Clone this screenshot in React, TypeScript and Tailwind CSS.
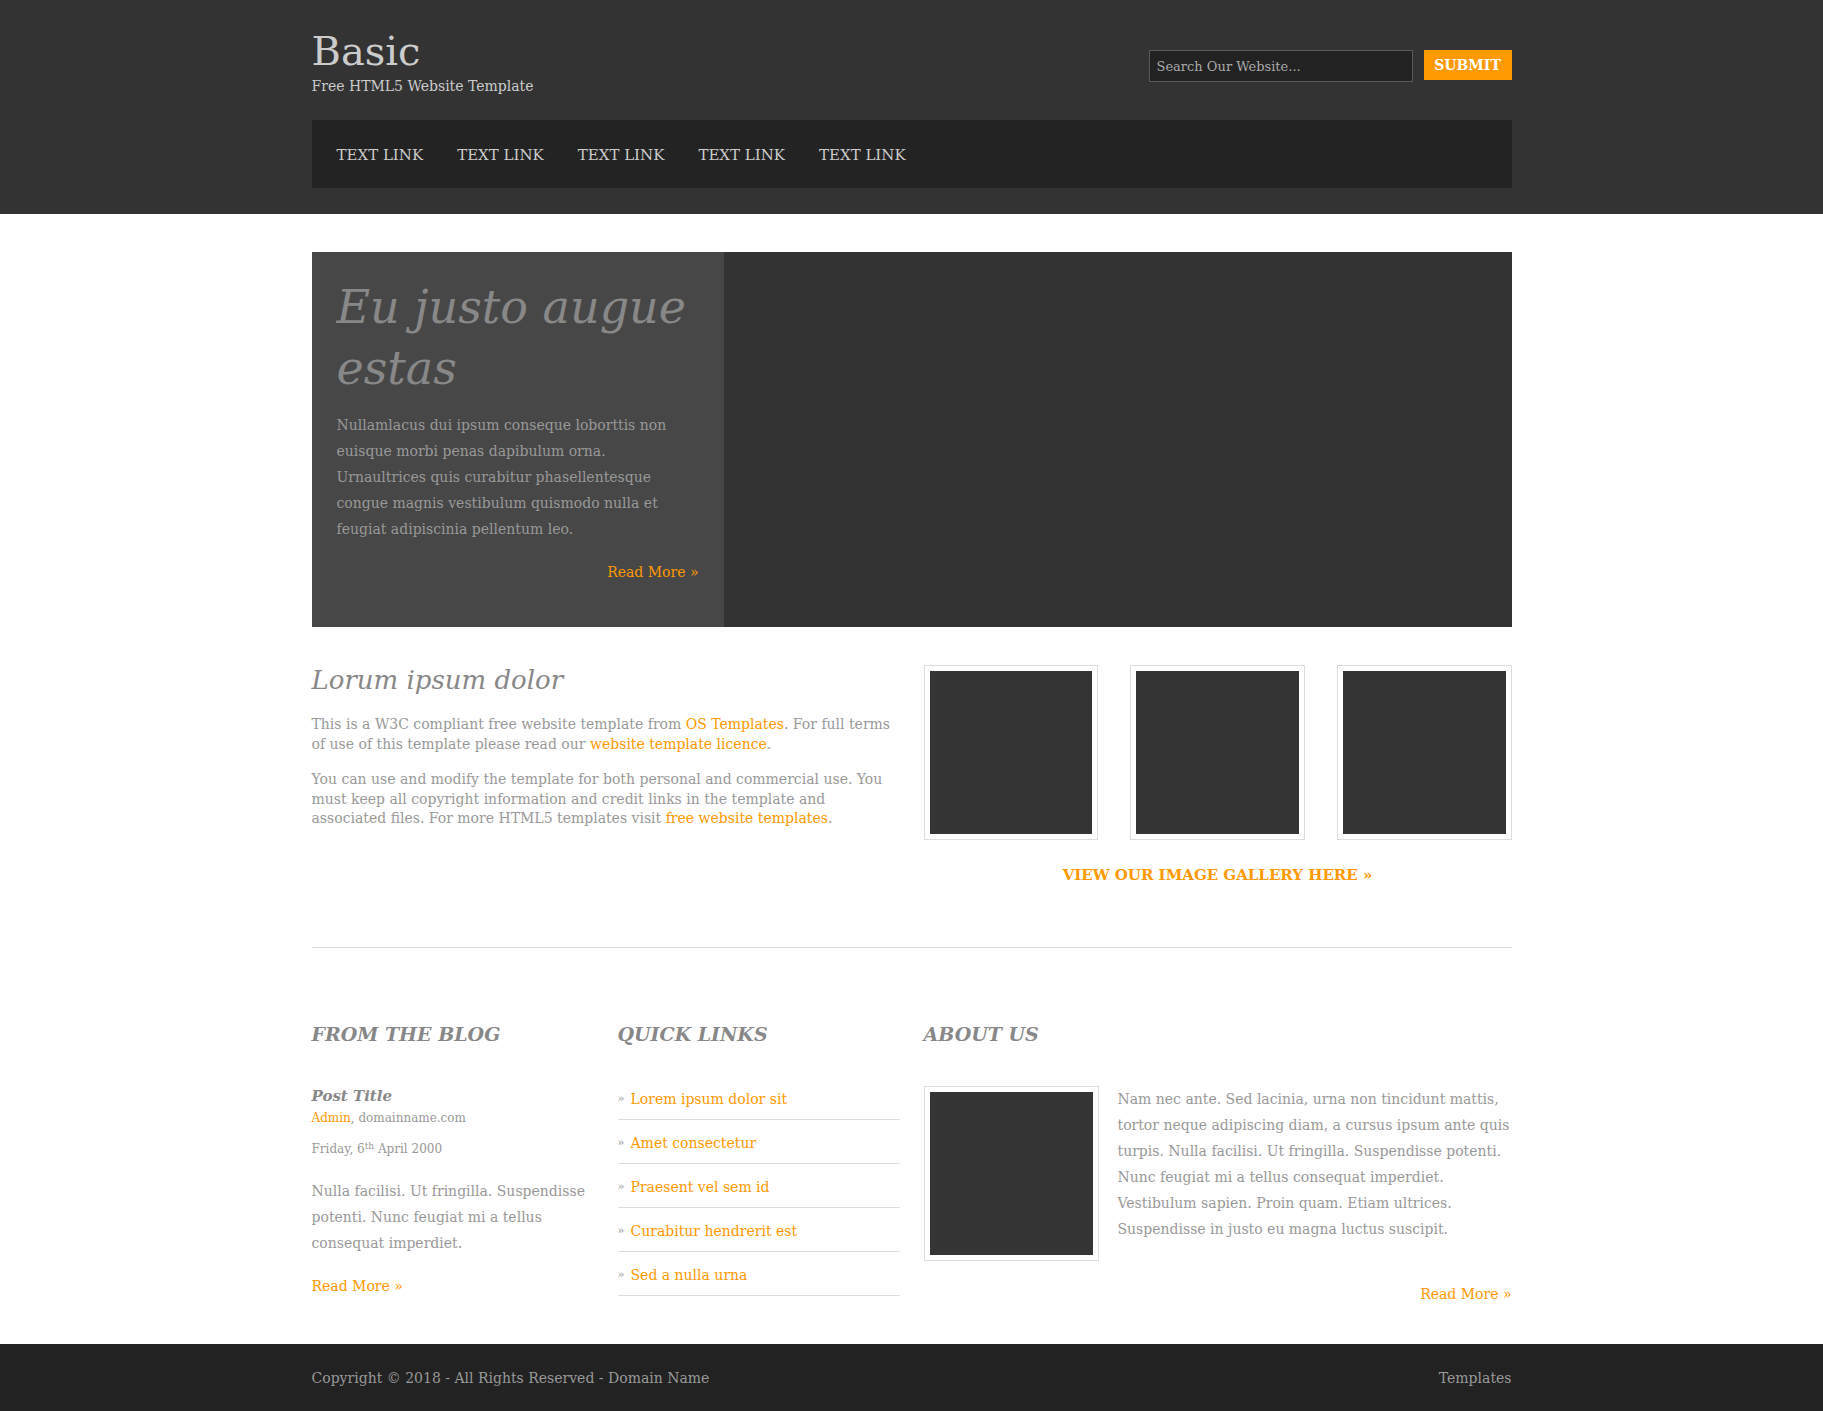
import React from "react";

const serif = "font-['DejaVu_Serif',Georgia,serif]";

const navLinks = ["TEXT LINK", "TEXT LINK", "TEXT LINK", "TEXT LINK", "TEXT LINK"];

const quickLinks = [
  "Lorem ipsum dolor sit",
  "Amet consectetur",
  "Praesent vel sem id",
  "Curabitur hendrerit est",
  "Sed a nulla urna",
];

function Thumb() {
  return (
    <div className="h-[175px] border border-[#dddddd] bg-white p-[5px]">
      <div className="h-full w-full bg-[#353535]" />
    </div>
  );
}

export default function App() {
  return (
    <div className={`${serif} min-h-[1411px] bg-white text-[14px] text-[#999999]`}>
      {/* header */}
      <header className="bg-[#333333] pb-[26px]">
        <div className="mx-auto w-[1200px]">
          <div className="flex items-start justify-between">
            <div className="pt-[31px]">
              <h1 className="text-[40px] leading-[40px] text-[#cccccc]">Basic</h1>
              <p className="mt-[6px] text-[14px] leading-[18px] text-[#cccccc]">
                Free HTML5 Website Template
              </p>
            </div>
            <form className="mt-[50px] flex items-start gap-[11px]">
              <input
                type="text"
                placeholder="Search Our Website..."
                className="h-[32px] w-[264px] border border-[#5a5a5a] bg-[#222222] px-[7px] text-[13px] text-[#aaaaaa] placeholder:text-[#aaaaaa] outline-none"
              />
              <button
                type="button"
                className="h-[30px] w-[88px] bg-[#ff9900] text-[14px] font-bold text-white"
              >
                SUBMIT
              </button>
            </form>
          </div>
          <nav className="mt-[25px] flex h-[68px] items-center gap-[34px] bg-[#232323] px-[25px] pt-[2px]">
            {navLinks.map((l, i) => (
              <a key={i} href="#" className="text-[15px] text-[#cccccc]">
                {l}
              </a>
            ))}
          </nav>
        </div>
      </header>

      <main className="mx-auto w-[1200px]">
        {/* hero */}
        <section className="mt-[38px] flex h-[375px] bg-[#333333]">
          <div className="w-[412px] bg-[#474747] px-[25px] pt-[25px]">
            <h2 className="text-[46px] italic leading-[61px] text-[#888888]">
              Eu justo augue estas
            </h2>
            <p className="mt-[13px] text-[14px] leading-[26px] text-[#999999]">
              Nullamlacus dui ipsum conseque loborttis non euisque morbi penas dapibulum orna.
              Urnaultrices quis curabitur phasellentesque congue magnis vestibulum quismodo nulla
              et feugiat adipiscinia pellentum leo.
            </p>
            <p className="mt-[20px] text-right leading-[20px]">
              <a href="#" className="text-[#ff9900]">
                Read More &raquo;
              </a>
            </p>
          </div>
          <div className="flex-1" />
        </section>

        {/* intro + gallery */}
        <section className="grid grid-cols-4 gap-x-6 pt-[38px]">
          <div className="col-span-2">
            <h2 className="text-[26px] italic leading-[31px] text-[#888888]">Lorum ipsum dolor</h2>
            <p className="mt-[19px] leading-[19.5px]">
              This is a W3C compliant free website template from{" "}
              <a href="#" className="text-[#ff9900]">OS Templates</a>. For full terms of use of
              this template please read our{" "}
              <a href="#" className="text-[#ff9900]">website template licence</a>.
            </p>
            <p className="mt-[16px] leading-[19.5px]">
              You can use and modify the template for both personal and commercial use. You must
              keep all copyright information and credit links in the template and associated files.
              For more HTML5 templates visit{" "}
              <a href="#" className="text-[#ff9900]">free website templates</a>.
            </p>
          </div>
          <div className="col-span-2">
            <div className="grid grid-cols-3 gap-8">
              <Thumb />
              <Thumb />
              <Thumb />
            </div>
            <p className="mt-[25px] text-center text-[15px] font-bold leading-[20px]">
              <a href="#" className="text-[#ff9900]">VIEW OUR IMAGE GALLERY HERE &raquo;</a>
            </p>
          </div>
        </section>

        <hr className="mt-[62px] border-0 border-t border-[#dddddd]" />

        {/* bottom columns */}
        <section className="grid grid-cols-4 gap-x-6 pt-[75px] pb-[40px]">
          <div>
            <h3 className="text-[19px] font-bold italic leading-[23px] text-[#888888]">
              FROM THE BLOG
            </h3>
            <h4 className="mt-[41px] text-[15px] font-bold italic leading-[18px] text-[#888888]">
              Post Title
            </h4>
            <p className="mt-[5px] text-[12px] leading-[16px]">
              <a href="#" className="text-[#ff9900]">Admin</a>, domainname.com
            </p>
            <p className="mt-[15px] text-[12px] leading-[16px]">
              Friday, 6<sup className="text-[9px]">th</sup> April 2000
            </p>
            <p className="mt-[21px] leading-[26px]">
              Nulla facilisi. Ut fringilla. Suspendisse potenti. Nunc feugiat mi a tellus consequat
              imperdiet.
            </p>
            <p className="mt-[20px] leading-[20px]">
              <a href="#" className="text-[#ff9900]">Read More &raquo;</a>
            </p>
          </div>

          <div>
            <h3 className="text-[19px] font-bold italic leading-[23px] text-[#888888]">
              QUICK LINKS
            </h3>
            <ul className="mt-[30px]">
              {quickLinks.map((q) => (
                <li
                  key={q}
                  className="flex items-center border-b border-[#dddddd] pt-[13px] pb-[10px] leading-[20px]"
                >
                  <span className="w-[13px] text-[11px] font-bold text-[#b5b5b5]">&raquo;</span>
                  <a href="#" className="text-[#ff9900]">{q}</a>
                </li>
              ))}
            </ul>
          </div>

          <div className="col-span-2">
            <h3 className="text-[19px] font-bold italic leading-[23px] text-[#888888]">ABOUT US</h3>
            <div className="mt-[40px] flex items-start gap-[19px]">
              <div className="w-[175px] shrink-0">
                <Thumb />
              </div>
              <p className="leading-[26px]">
                Nam nec ante. Sed lacinia, urna non tincidunt mattis, tortor neque adipiscing diam,
                a cursus ipsum ante quis turpis. Nulla facilisi. Ut fringilla. Suspendisse potenti.
                Nunc feugiat mi a tellus consequat imperdiet. Vestibulum sapien. Proin quam. Etiam
                ultrices. Suspendisse in justo eu magna luctus suscipit.
              </p>
            </div>
            <p className="mt-[23px] text-right leading-[20px]">
              <a href="#" className="text-[#ff9900]">Read More &raquo;</a>
            </p>
          </div>
        </section>
      </main>

      <footer className="bg-[#222222] py-[24px]">
        <div className="mx-auto flex w-[1200px] justify-between leading-[20px] text-[#999999]">
          <p>Copyright &copy; 2018 - All Rights Reserved - Domain Name</p>
          <p>
            <a href="#">Templates</a>
          </p>
        </div>
      </footer>
    </div>
  );
}
